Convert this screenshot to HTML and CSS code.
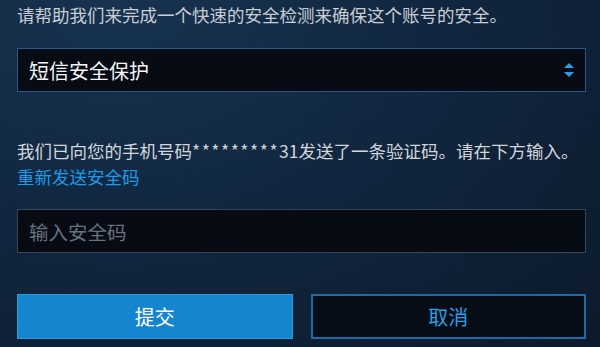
FILE: index.html
```html
<!DOCTYPE html>
<html lang="zh-CN">
<head>
  <meta charset="UTF-8" />
  <title>安全检测</title>
  <link rel="stylesheet" href="styles.css">
</head>
<body>
  <div class="panel">
    <p class="intro">请帮助我们来完成一个快速的安全检测来确保这个账号的安全。</p>

    <div class="select-wrap">
      <select class="method">
        <option>短信安全保护</option>
      </select>
      <svg class="arrows" width="10" height="14" viewBox="0 0 10 14">
        <path d="M5 0 L10 5 L0 5 Z" fill="#2f9be2" />
        <path d="M0 9 L10 9 L5 14 Z" fill="#2f9be2" />
      </svg>
    </div>

    <p class="sent">我们已向您的手机号码<span class="mask">*********</span>31发送了一条验证码。请在下方输入。</p>
    <a class="resend" href="#">重新发送安全码</a>

    <input type="text" class="code" placeholder="输入安全码" />

    <div class="actions">
      <button class="btn btn-submit">提交</button>
      <button class="btn btn-cancel">取消</button>
    </div>
  </div>
</body>
</html>
```

FILE: styles.css
```css
html, body {
  height: 100%;
}
body {
  margin: 0;
  font-family: "Noto Sans CJK SC", "Noto Sans", sans-serif;
  background: radial-gradient(ellipse at 20% 0%, #173350 0%, #112740 45%, #0c1a2b 100%);
  color: #c9cdd3;
  overflow: hidden;
}
.panel {
  padding: 3px 14px 0 17px;
  display: flex;
  flex-direction: column;
}
.intro {
  margin: 0;
  font-size: 17.5px;
  line-height: 24px;
}
.select-wrap {
  position: relative;
  margin-top: 21px;
}
.method {
  appearance: none;
  -webkit-appearance: none;
  width: 100%;
  height: 44px;
  box-sizing: border-box;
  padding: 0 11px;
  border: 1px solid #24568a;
  border-radius: 0;
  background: #060b14;
  color: #f2f4f6;
  font-family: inherit;
  font-size: 20px;
}
.arrows {
  position: absolute;
  right: 12px;
  top: 15px;
}
.sent {
  margin: 46px 0 0;
  font-size: 17.5px;
  line-height: 26px;
  color: #d2d6db;
}
.mask {
  letter-spacing: 1.5px;
}
.resend {
  font-size: 17.5px;
  line-height: 26px;
  color: #1d9be6;
  text-decoration: none;
}
.code {
  margin-top: 19px;
  height: 44px;
  box-sizing: border-box;
  padding: 0 11px;
  border: 1px solid #3a4654;
  background: #060b14;
  color: #f2f4f6;
  font-family: inherit;
  font-size: 19.5px;
  outline: none;
}
.code::placeholder {
  color: #69727d;
}
.actions {
  margin-top: 41px;
  display: grid;
  grid-template-columns: 1fr 1fr;
  gap: 18px;
}
.btn {
  height: 45px;
  font-family: inherit;
  font-size: 20px;
  border-radius: 0;
}
.btn-submit {
  background: #1585cf;
  border: 1px solid #2a9be0;
  color: #ffffff;
}
.btn-cancel {
  background: #070d17;
  border: 2px solid #1c6aa6;
  color: #2a9fe6;
}
```
